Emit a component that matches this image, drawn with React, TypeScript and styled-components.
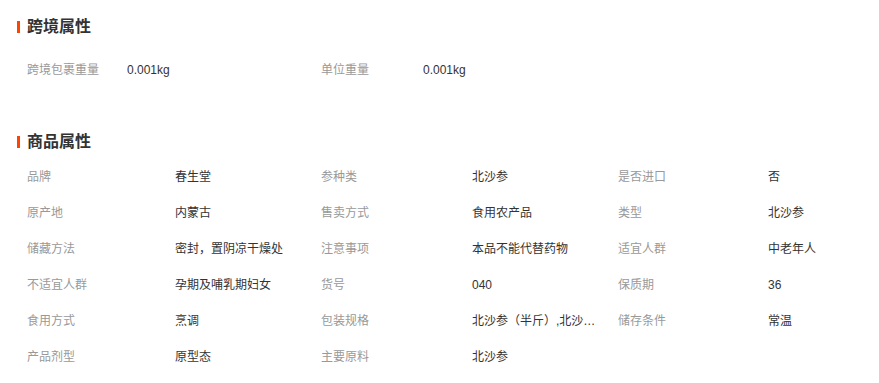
import React from "react";
import styled, { createGlobalStyle } from "styled-components";

const Global = createGlobalStyle`
  html, body { margin: 0; padding: 0; background: #fff; }
  body { font-family: "Liberation Sans", "Noto Sans CJK SC", sans-serif; }
`;

const Page = styled.div`
  width: 879px;
  height: 383px;
  overflow: hidden;
  padding-left: 17px;
  box-sizing: border-box;
`;

const Section = styled.section<{ $top: number }>`
  padding-top: ${(p) => p.$top}px;
`;

const Title = styled.h3`
  display: flex;
  align-items: center;
  gap: 7px;
  margin: 0;
  height: 20px;
  font-size: 16px;
  font-weight: bold;
  color: #333;
  line-height: 20px;
`;

const Bar = styled.span`
  width: 3px;
  height: 12px;
  background: #ff4400;
`;

const Grid = styled.div<{ $cols: string; $top: number }>`
  display: grid;
  grid-template-columns: ${(p) => p.$cols};
  grid-auto-rows: 36px;
  padding-left: 10px;
  margin-top: ${(p) => p.$top}px;
  font-size: 12px;
`;

const Label = styled.div`
  color: #999;
  line-height: 36px;
  white-space: nowrap;
`;

const Value = styled.div`
  color: #333;
  line-height: 36px;
  white-space: nowrap;
  overflow: hidden;
  text-overflow: ellipsis;
  padding-right: 18px;
`;

type Pair = [string, string];

const cross: Pair[] = [
  ["跨境包裹重量", "0.001kg"],
  ["单位重量", "0.001kg"],
];

const goods: Pair[] = [
  ["品牌", "春生堂"],
  ["参种类", "北沙参"],
  ["是否进口", "否"],
  ["原产地", "内蒙古"],
  ["售卖方式", "食用农产品"],
  ["类型", "北沙参"],
  ["储藏方法", "密封，置阴凉干燥处"],
  ["注意事项", "本品不能代替药物"],
  ["适宜人群", "中老年人"],
  ["不适宜人群", "孕期及哺乳期妇女"],
  ["货号", "040"],
  ["保质期", "36"],
  ["食用方式", "烹调"],
  ["包装规格", "北沙参（半斤）,北沙参（一斤）"],
  ["储存条件", "常温"],
  ["产品剂型", "原型态"],
  ["主要原料", "北沙参"],
];

const renderPairs = (pairs: Pair[]) =>
  pairs.map(([k, v]) => (
    <React.Fragment key={k}>
      <Label>{k}</Label>
      <Value>{v}</Value>
    </React.Fragment>
  ));

export default function App() {
  return (
    <>
      <Global />
      <Page>
        <Section $top={17}>
          <Title>
            <Bar />
            跨境属性
          </Title>
          <Grid $cols="100px 194px 102px 1fr" $top={15}>
            {renderPairs(cross)}
          </Grid>
        </Section>
        <Section $top={44}>
          <Title>
            <Bar />
            商品属性
          </Title>
          <Grid $cols="148px 146px 151px 146px 150px 1fr" $top={7}>
            {renderPairs(goods)}
          </Grid>
        </Section>
      </Page>
    </>
  );
}
